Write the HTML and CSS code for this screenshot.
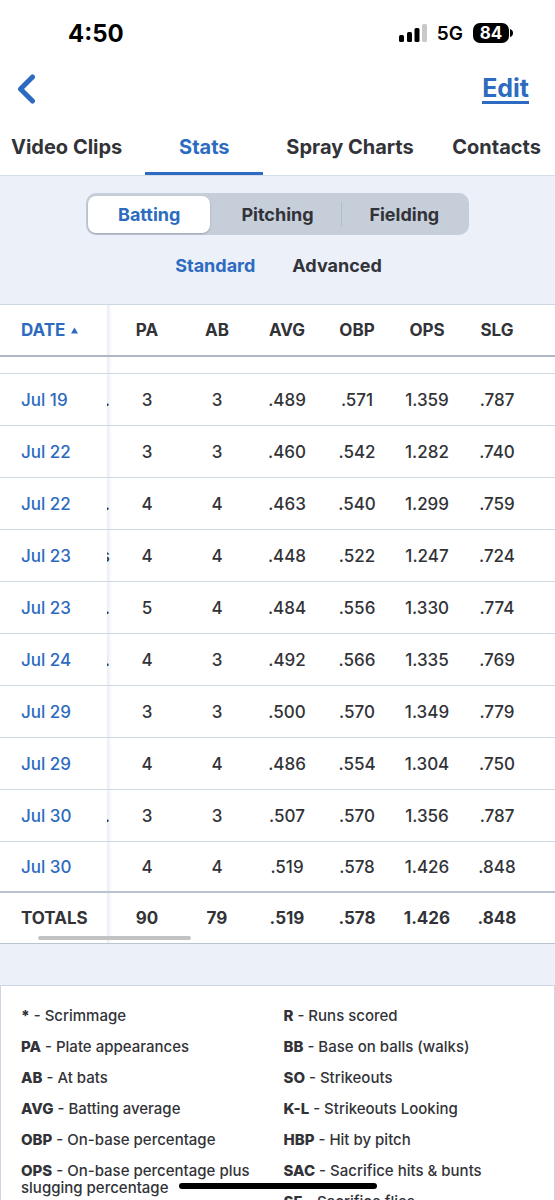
FILE: index.html
```html
<!DOCTYPE html>
<html lang="en">
<head>
<meta charset="utf-8">
<meta name="viewport" content="width=device-width, initial-scale=1">
<title>Player Stats</title>
<link rel="stylesheet" href="styles.css">
</head>
<body>
<div class="app">
  <div class="status">
    <span class="clock">4:50</span>
    <div class="status-icons">
      <svg class="signal" width="28" height="18" viewBox="0 0 28 18" aria-hidden="true">
        <rect x="0" y="11" width="5" height="7" rx="1.5"/>
        <rect x="8" y="8" width="5" height="10" rx="1.5"/>
        <rect x="15.500" y="4" width="5" height="14" rx="1.5"/>
        <rect x="23" y="0" width="5" height="18" rx="1.5" fill="#c9c9c9"/>
      </svg>
      <span class="network">5G</span>
      <span class="battery"><span class="level">84</span><svg width="3" height="8" viewBox="0 0 3 8" aria-hidden="true"><path d="M0 0Q3 1 3 4T0 8Z"/></svg></span>
    </div>
  </div>

  <header class="nav">
    <button class="back" type="button" aria-label="Back">
      <svg width="18" height="30" viewBox="0 0 18 30" aria-hidden="true"><path d="M15.500 3L3.500 15L15.500 27" fill="none" stroke="#2d6bc0" stroke-width="5" stroke-linecap="round" stroke-linejoin="round"/></svg>
    </button>
    <a class="edit" href="#edit">Edit</a>
  </header>

  <nav class="tabs">
    <a class="tab" href="#clips">Video Clips</a>
    <a class="tab active" href="#stats">Stats</a>
    <a class="tab" href="#spray">Spray Charts</a>
    <a class="tab last" href="#contacts">Contacts</a>
  </nav>

  <section class="filters">
    <div class="segments">
      <button class="segment selected" type="button">Batting</button>
      <button class="segment" type="button">Pitching</button>
      <button class="segment divided" type="button">Fielding</button>
    </div>
    <div class="modes">
      <button class="mode selected" type="button">Standard</button>
      <button class="mode" type="button">Advanced</button>
    </div>
  </section>

  <div class="table-wrap">
    <table class="stats">
      <colgroup><col class="col-date"><col class="col-edge"><col class="col-stat"><col class="col-stat"><col class="col-stat"><col class="col-stat"><col class="col-stat"><col class="col-stat"><col></colgroup>
      <thead>
        <tr><th class="date"><button class="sort" type="button">DATE <svg width="7" height="7" viewBox="0 0 8 7" aria-hidden="true"><path d="M4 0L8 7H0Z" fill="#2d6bc0"/></svg></button></th><th class="edge"></th><th>PA</th><th>AB</th><th>AVG</th><th>OBP</th><th>OPS</th><th>SLG</th><th></th></tr>
      </thead>
      <tbody>
        <tr class="partial"><td class="date"></td><td class="edge"></td><td></td><td></td><td></td><td></td><td></td><td></td><td></td></tr>
        <tr><td class="date"><a href="#g1">Jul 19</a></td><td class="edge"><div class="peek">.</div></td><td>3</td><td>3</td><td>.489</td><td>.571</td><td>1.359</td><td>.787</td><td></td></tr>
        <tr><td class="date"><a href="#g2">Jul 22</a></td><td class="edge"></td><td>3</td><td>3</td><td>.460</td><td>.542</td><td>1.282</td><td>.740</td><td></td></tr>
        <tr><td class="date"><a href="#g3">Jul 22</a></td><td class="edge"><div class="peek">.</div></td><td>4</td><td>4</td><td>.463</td><td>.540</td><td>1.299</td><td>.759</td><td></td></tr>
        <tr><td class="date"><a href="#g4">Jul 23</a></td><td class="edge"><div class="peek">s</div></td><td>4</td><td>4</td><td>.448</td><td>.522</td><td>1.247</td><td>.724</td><td></td></tr>
        <tr><td class="date"><a href="#g5">Jul 23</a></td><td class="edge"><div class="peek">.</div></td><td>5</td><td>4</td><td>.484</td><td>.556</td><td>1.330</td><td>.774</td><td></td></tr>
        <tr><td class="date"><a href="#g6">Jul 24</a></td><td class="edge"><div class="peek">.</div></td><td>4</td><td>3</td><td>.492</td><td>.566</td><td>1.335</td><td>.769</td><td></td></tr>
        <tr><td class="date"><a href="#g7">Jul 29</a></td><td class="edge"></td><td>3</td><td>3</td><td>.500</td><td>.570</td><td>1.349</td><td>.779</td><td></td></tr>
        <tr><td class="date"><a href="#g8">Jul 29</a></td><td class="edge"></td><td>4</td><td>4</td><td>.486</td><td>.554</td><td>1.304</td><td>.750</td><td></td></tr>
        <tr><td class="date"><a href="#g9">Jul 30</a></td><td class="edge"><div class="peek">.</div></td><td>3</td><td>3</td><td>.507</td><td>.570</td><td>1.356</td><td>.787</td><td></td></tr>
        <tr><td class="date"><a href="#g10">Jul 30</a></td><td class="edge"></td><td>4</td><td>4</td><td>.519</td><td>.578</td><td>1.426</td><td>.848</td><td></td></tr>
      </tbody>
      <tfoot>
        <tr><th class="date">TOTALS</th><td class="edge"></td><td>90</td><td>79</td><td>.519</td><td>.578</td><td>1.426</td><td>.848</td><td></td></tr>
      </tfoot>
    </table>
    <div class="scroll-thumb"></div>
  </div>

  <section class="legend">
    <ul>
      <li><b>*</b> - Scrimmage</li>
      <li><b>PA</b> - Plate appearances</li>
      <li><b>AB</b> - At bats</li>
      <li><b>AVG</b> - Batting average</li>
      <li><b>OBP</b> - On-base percentage</li>
      <li><b>OPS</b> - On-base percentage plus slugging percentage</li>
    </ul>
    <ul>
      <li><b>R</b> - Runs scored</li>
      <li><b>BB</b> - Base on balls (walks)</li>
      <li><b>SO</b> - Strikeouts</li>
      <li><b>K-L</b> - Strikeouts Looking</li>
      <li><b>HBP</b> - Hit by pitch</li>
      <li><b>SAC</b> - Sacrifice hits &amp; bunts</li>
      <li><b>SF</b> - Sacrifice flies</li>
    </ul>
  </section>
  <div class="home-bar"></div>
</div>
</body>
</html>
```
FILE: styles.css
```css
* { box-sizing: border-box; }
body {
  margin: 0;
  background: #ebf0f9;
  color: #323338;
  font-family: Inter, "Liberation Sans", sans-serif;
}
button { margin: 0; padding: 0; border: 0; background: none; color: inherit; font: inherit; }
a { color: inherit; text-decoration: none; }
ul { margin: 0; padding: 0; list-style: none; }
svg { display: block; }

.app { height: 100vh; overflow: hidden; display: flex; flex-direction: column; }
.app > * { flex-shrink: 0; }

.status {
  display: flex; align-items: center; justify-content: space-between;
  height: 66px; padding: 0 42px 0 68px;
  background: #fff; color: #000;
}
.clock { font-size: 24px; font-weight: 700; }
.status-icons { display: flex; align-items: center; gap: 10px; }
.network { font-size: 19px; font-weight: 600; }
.battery { display: flex; align-items: center; gap: 1px; }
.level {
  width: 36px; border-radius: 7px; background: #000; color: #fff;
  font-size: 17px; line-height: 20px; font-weight: 700; text-align: center;
}

.nav {
  display: flex; align-items: center; justify-content: space-between;
  height: 46px; padding: 0 26px 0 17px;
  background: #fff; color: #2d6bc0;
}
.edit {
  border-bottom: 3px solid #2d6bc0;
  font-size: 25px; line-height: 26px; font-weight: 700;
}

.tabs {
  display: flex; gap: 23px;
  height: 64px; padding: 0 14px 0 11px;
  border-bottom: 1px solid #d5ddea; background: #fff;
}
.tab {
  padding-top: 22px;
  font-size: 20px; line-height: 26px; font-weight: 700; white-space: nowrap;
}
.tab.active { width: 118px; border-bottom: 3px solid #2d6bc0; color: #2d6bc0; text-align: center; }
.tab.last { margin-left: auto; }

.filters {
  display: flex; flex-direction: column; align-items: center;
  height: 129px; padding-top: 17px;
  border-bottom: 1px solid #cfd6e4;
}
.segments {
  display: grid; grid-template-columns: repeat(3, 1fr); align-items: center;
  width: 69%; height: 42px; padding: 2px; border-radius: 10px;
  background: #c5ced9;
}
.segment { height: 37px; font-size: 18px; font-weight: 700; }
.segment.selected { margin-right: 4px; border-radius: 8px; background: #fff; color: #2d6bc0; box-shadow: 0 1px 2px rgba(60, 70, 90, .3); }
.segment.divided { height: 24px; border-left: 1px solid #b3bdca; }
.modes { display: flex; gap: 37px; padding: 19px 0 0 2px; }
.mode { font-size: 18px; line-height: 24px; font-weight: 700; }
.mode.selected { color: #2d6bc0; }

.table-wrap { position: relative; overflow: hidden; background: #fff; }
.stats {
  width: 100%; border-collapse: separate; border-spacing: 0; table-layout: fixed;
  font-size: 17px; line-height: 20px; font-weight: 500;
}
.col-date { width: 107px; }
.col-edge { width: 5px; }
.col-stat { width: 70px; }
.stats th, .stats td {
  height: 52px; padding: 0;
  border-bottom: 1px solid #cfd8e5; text-align: center; white-space: nowrap;
}
.stats .date { padding-left: 21px; text-align: left; }
.stats td.date, .sort { color: #2d6bc0; }
.sort { display: flex; align-items: center; gap: 6px; }
.stats .edge { background: linear-gradient(90deg, #e8ecf3, #fff); }
.peek { display: flex; justify-content: flex-end; width: 3px; overflow: hidden; }
.stats thead th { border-bottom: 2px solid #afb7c6; font-weight: 700; }
.stats .partial td { height: 17px; }
.stats tbody tr:last-child td { height: 51px; border-bottom: 2px solid #b9c4d0; }
.stats tfoot th, .stats tfoot td { height: 51px; border-bottom-color: #b9c4d0; font-weight: 700; }
.scroll-thumb {
  position: absolute; left: 38px; bottom: 4px;
  width: 153px; height: 4px; border-radius: 2px; background: #c2c2c2;
}

.legend {
  display: grid; grid-template-columns: 1fr 1fr;
  margin-top: 41px; padding: 21px 8px 21px 20px;
  border: 1px solid #cdd7e4; background: #fff;
  font-size: 15px; line-height: 17px; font-weight: 500;
}
.legend ul { display: grid; gap: 14px; align-content: start; }
.legend b { font-weight: 800; }
.home-bar {
  position: fixed; left: 50%; bottom: 11px; transform: translateX(-50%);
  width: 198px; height: 6px; border-radius: 3px; background: #000;
}
```
